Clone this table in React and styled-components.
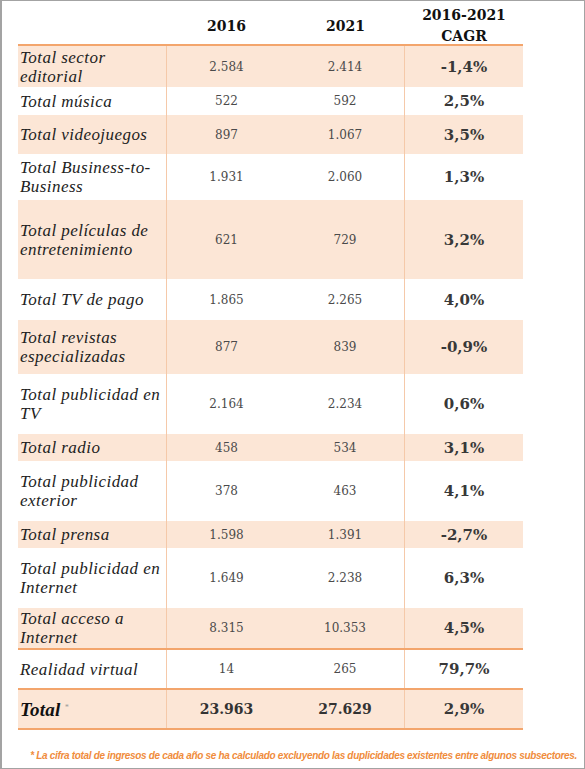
import React from "react";
import styled, { createGlobalStyle } from "styled-components";

const GlobalStyle = createGlobalStyle`
  html, body {
    margin: 0;
    padding: 0;
    background: #ffffff;
  }
  body {
    font-family: "Liberation Serif", serif;
    color: #2a2a2a;
  }
`;

const Frame = styled.div`
  width: 585px;
  height: 769px;
  box-sizing: border-box;
  border: 1px solid #a3a3a3;
  border-left-width: 2px;
  padding: 0 0 0 16px;
  display: flex;
  flex-direction: column;
  overflow: hidden;
`;

const Table = styled.div`
  width: 505px;
  display: flex;
  flex-direction: column;
`;

const Row = styled.div`
  display: grid;
  grid-template-columns: 149px 119px 119px 118px;
  height: ${(p) => p.$h}px;
  background: ${(p) => (p.$shade ? "#fce6d6" : "transparent")};
  border-bottom: ${(p) => (p.$rule ? "2px solid #f3a56c" : "none")};
`;

const HeadRow = styled(Row)`
  border-bottom: 2px solid #f3a56c;
`;

const Cell = styled.div`
  display: flex;
  align-items: center;
  justify-content: center;
  text-align: center;
  border-right: ${(p) => (p.$divider ? "1px solid #f5c9a9" : "none")};
`;

const HeadCell = styled(Cell)`
  font-family: "DejaVu Serif", serif;
  font-weight: 700;
  font-size: 14px;
  line-height: 21px;
  color: #111;
  padding-top: 4px;
`;

const Label = styled(Cell)`
  justify-content: flex-start;
  text-align: left;
  padding-left: 2px;
  font-style: italic;
  font-size: 17px;
  line-height: 19px;
  letter-spacing: 0.45px;
  white-space: nowrap;
  color: #222;
`;

const TotalLabel = styled(Label)`
  font-weight: 700;
  font-size: 19px;
  letter-spacing: 0.2px;
  color: #111;
`;

const Star = styled.sup`
  font-size: 8px;
  font-weight: 400;
  color: #999;
  margin-left: 4px;
  position: relative;
  top: -2px;
`;

const Num = styled(Cell)`
  font-family: "DejaVu Serif", serif;
  font-size: 12px;
  color: #4a4a4a;
`;

const TotalNum = styled(Num)`
  font-weight: 700;
  font-size: 14px;
  color: #333;
`;

const Cagr = styled(Cell)`
  font-family: "DejaVu Serif", serif;
  font-weight: 700;
  font-size: 15px;
  color: #383838;
`;

const Footnote = styled.div`
  margin-top: 20px;
  padding-right: 7px;
  text-align: right;
  font-family: "Liberation Sans", sans-serif;
  font-style: italic;
  font-weight: 700;
  font-size: 10px;
  letter-spacing: -0.32px;
  white-space: nowrap;
  color: #f08c3c;
`;

const rows = [
  { label: ["Total sector", "editorial"], a: "2.584", b: "2.414", c: "-1,4%", h: 41, shade: true },
  { label: ["Total música"], a: "522", b: "592", c: "2,5%", h: 28 },
  { label: ["Total videojuegos"], a: "897", b: "1.067", c: "3,5%", h: 39, shade: true },
  { label: ["Total Business-to-", "Business"], a: "1.931", b: "2.060", c: "1,3%", h: 46 },
  { label: ["Total películas de", "entretenimiento"], a: "621", b: "729", c: "3,2%", h: 79, shade: true },
  { label: ["Total TV de pago"], a: "1.865", b: "2.265", c: "4,0%", h: 41 },
  { label: ["Total revistas", "especializadas"], a: "877", b: "839", c: "-0,9%", h: 54, shade: true },
  { label: ["Total publicidad en", "TV"], a: "2.164", b: "2.234", c: "0,6%", h: 60 },
  { label: ["Total radio"], a: "458", b: "534", c: "3,1%", h: 27, shade: true },
  { label: ["Total publicidad", "exterior"], a: "378", b: "463", c: "4,1%", h: 60 },
  { label: ["Total prensa"], a: "1.598", b: "1.391", c: "-2,7%", h: 27, shade: true },
  { label: ["Total publicidad en", "Internet"], a: "1.649", b: "2.238", c: "6,3%", h: 60 },
  { label: ["Total acceso a", "Internet"], a: "8.315", b: "10.353", c: "4,5%", h: 40, shade: true, rule: true },
  { label: ["Realidad virtual"], a: "14", b: "265", c: "79,7%", h: 38, rule: true },
];

const App = () => {
  return (
    <>
      <GlobalStyle />
      <Frame>
        <Table>
          <HeadRow $h={43}>
            <HeadCell />
            <HeadCell>2016</HeadCell>
            <HeadCell>2021</HeadCell>
            <HeadCell>
              2016-2021
              <br />
              CAGR
            </HeadCell>
          </HeadRow>
          {rows.map((r, k) => (
            <Row key={k} $h={r.h} $shade={r.shade} $rule={r.rule}>
              <Label $divider>
                <div>
                  {r.label.map((line, i) => (
                    <div key={i}>{line}</div>
                  ))}
                </div>
              </Label>
              <Num>{r.a}</Num>
              <Num $divider>{r.b}</Num>
              <Cagr>{r.c}</Cagr>
            </Row>
          ))}
          <Row $h={38} $shade $rule>
            <TotalLabel $divider>
              Total<Star>*</Star>
            </TotalLabel>
            <TotalNum>23.963</TotalNum>
            <TotalNum $divider>27.629</TotalNum>
            <Cagr>2,9%</Cagr>
          </Row>
        </Table>
        <Footnote>
          * La cifra total de ingresos de cada año se ha calculado excluyendo
          las duplicidades existentes entre algunos subsectores.
        </Footnote>
      </Frame>
    </>
  );
};

export default App;
